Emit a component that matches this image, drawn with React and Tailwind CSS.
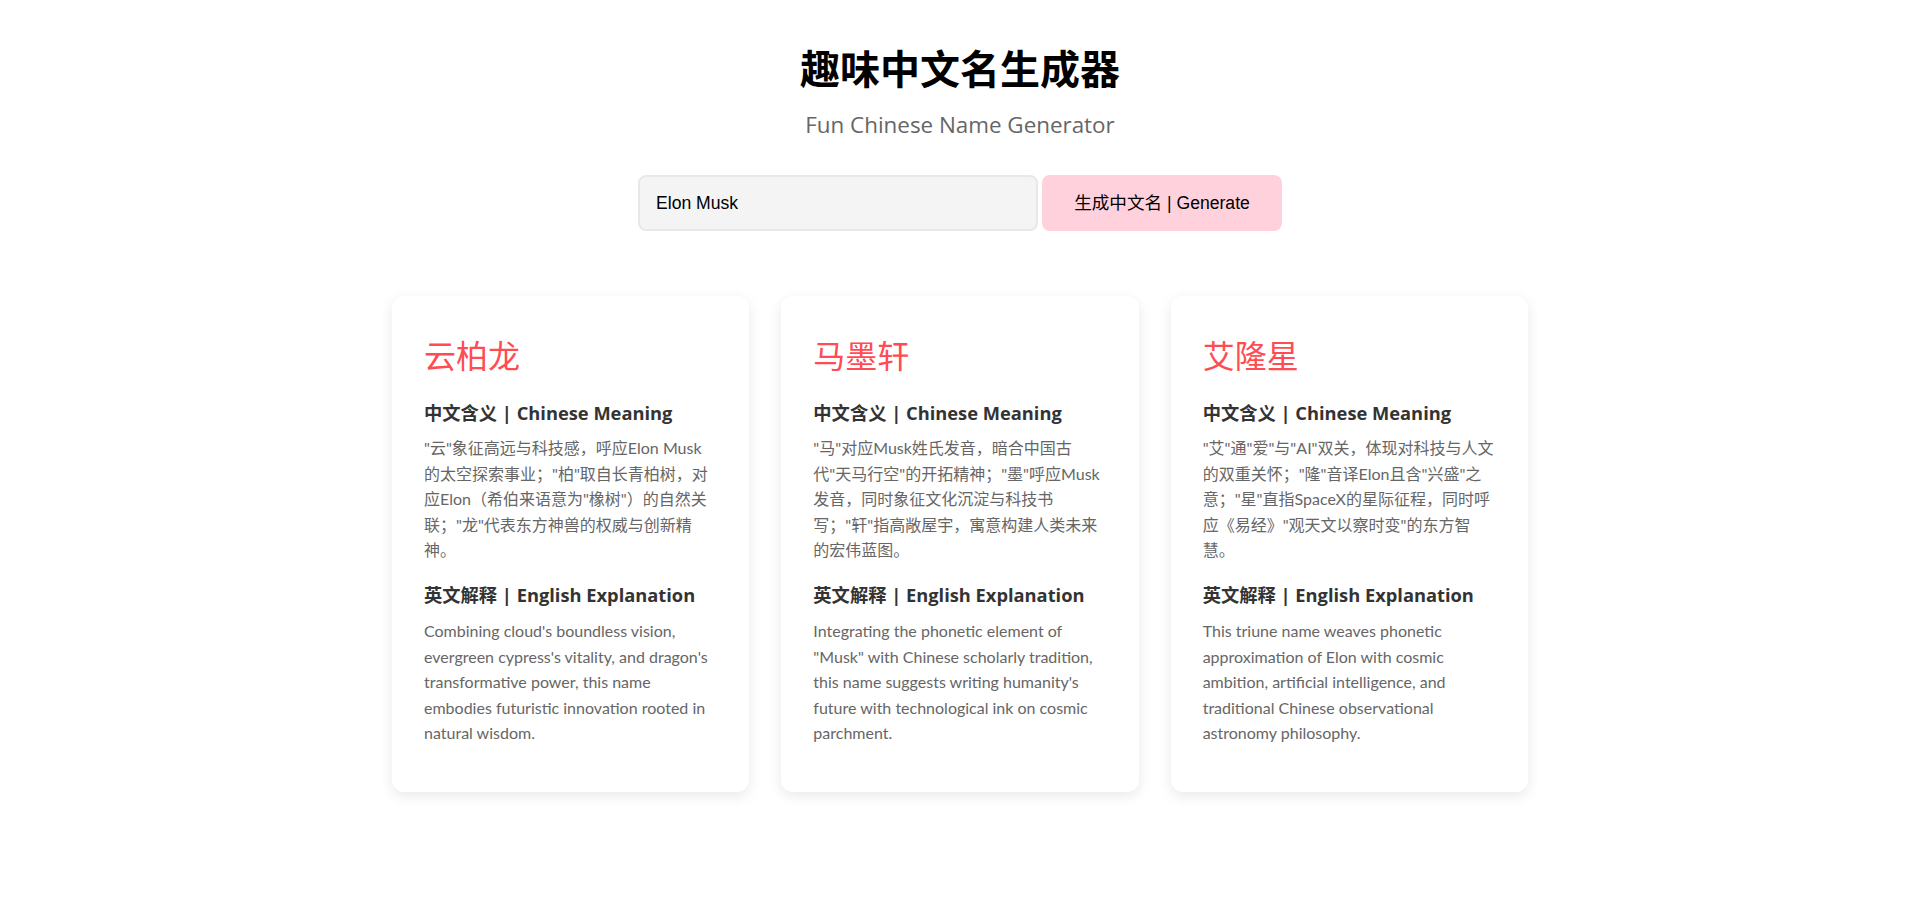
import { useState } from 'react'

const NAMES = [
  {
    name: '云柏龙',
    meaning:
      '"云"象征高远与科技感，呼应Elon Musk的太空探索事业；"柏"取自长青柏树，对应Elon（希伯来语意为"橡树"）的自然关联；"龙"代表东方神兽的权威与创新精神。',
    explanation:
      "Combining cloud's boundless vision, evergreen cypress's vitality, and dragon's transformative power, this name embodies futuristic innovation rooted in natural wisdom.",
  },
  {
    name: '马墨轩',
    meaning:
      '"马"对应Musk姓氏发音，暗合中国古代"天马行空"的开拓精神；"墨"呼应Musk发音，同时象征文化沉淀与科技书写；"轩"指高敞屋宇，寓意构建人类未来的宏伟蓝图。',
    explanation:
      'Integrating the phonetic element of "Musk" with Chinese scholarly tradition, this name suggests writing humanity\'s future with technological ink on cosmic parchment.',
  },
  {
    name: '艾隆星',
    meaning:
      '"艾"通"爱"与"AI"双关，体现对科技与人文的双重关怀；"隆"音译Elon且含"兴盛"之意；"星"直指SpaceX的星际征程，同时呼应《易经》"观天文以察时变"的东方智慧。',
    explanation:
      'This triune name weaves phonetic approximation of Elon with cosmic ambition, artificial intelligence, and traditional Chinese observational astronomy philosophy.',
  },
]

function NameCard({ item }) {
  return (
    <div className="bg-white rounded-xl px-8 pt-[34px] pb-[46px] shadow-[0_4px_14px_rgba(0,0,0,0.09)]">
      <h2 className="text-[32px] leading-[51px] text-[#ff4b52]">{item.name}</h2>
      <h3 className="mt-[17px] text-[18.3px] leading-[30px] font-bold text-[#333] font-['Open_Sans','Noto_Sans_CJK_SC',sans-serif]">
        中文含义 | Chinese Meaning
      </h3>
      <p className="mt-[7px] text-[16px] leading-[25.6px] text-[#666]">{item.meaning}</p>
      <h3 className="mt-[17px] text-[18.3px] leading-[30px] font-bold text-[#333] font-['Open_Sans','Noto_Sans_CJK_SC',sans-serif]">
        英文解释 | English Explanation
      </h3>
      <p className="mt-[8px] text-[16px] leading-[25.6px] text-[#666]">{item.explanation}</p>
    </div>
  )
}

export default function App() {
  const [value, setValue] = useState('Elon Musk')

  return (
    <div className="min-h-screen bg-white pt-[43px] font-['Lato','Noto_Sans_CJK_SC',sans-serif]">
      <h1 className="text-center text-[40px] leading-[48px] font-bold text-black font-['Noto_Sans_CJK_SC',sans-serif]">
        趣味中文名生成器
      </h1>
      <p className="mt-[21px] text-center text-[22.4px] leading-[26px] text-[#666] font-['Open_Sans',sans-serif]">
        Fun Chinese Name Generator
      </p>

      <div className="mt-[37px] flex justify-center items-center gap-1 font-['Liberation_Sans','Noto_Sans_CJK_SC',sans-serif]">
        <input
          value={value}
          onChange={(e) => setValue(e.target.value)}
          className="w-[400px] h-[56px] px-4 rounded-lg border-2 border-[#e8e8e8] bg-[#f4f4f4] text-[17.6px] text-black outline-none"
        />
        <button className="w-[240px] h-[56px] rounded-lg bg-[#ffd1dc] text-[17.6px] text-black">
          生成中文名 | Generate
        </button>
      </div>

      <div className="mt-[65px] mx-auto w-[1136px] grid grid-cols-3 gap-8">
        {NAMES.map((n) => (
          <NameCard key={n.name} item={n} />
        ))}
      </div>
    </div>
  )
}
